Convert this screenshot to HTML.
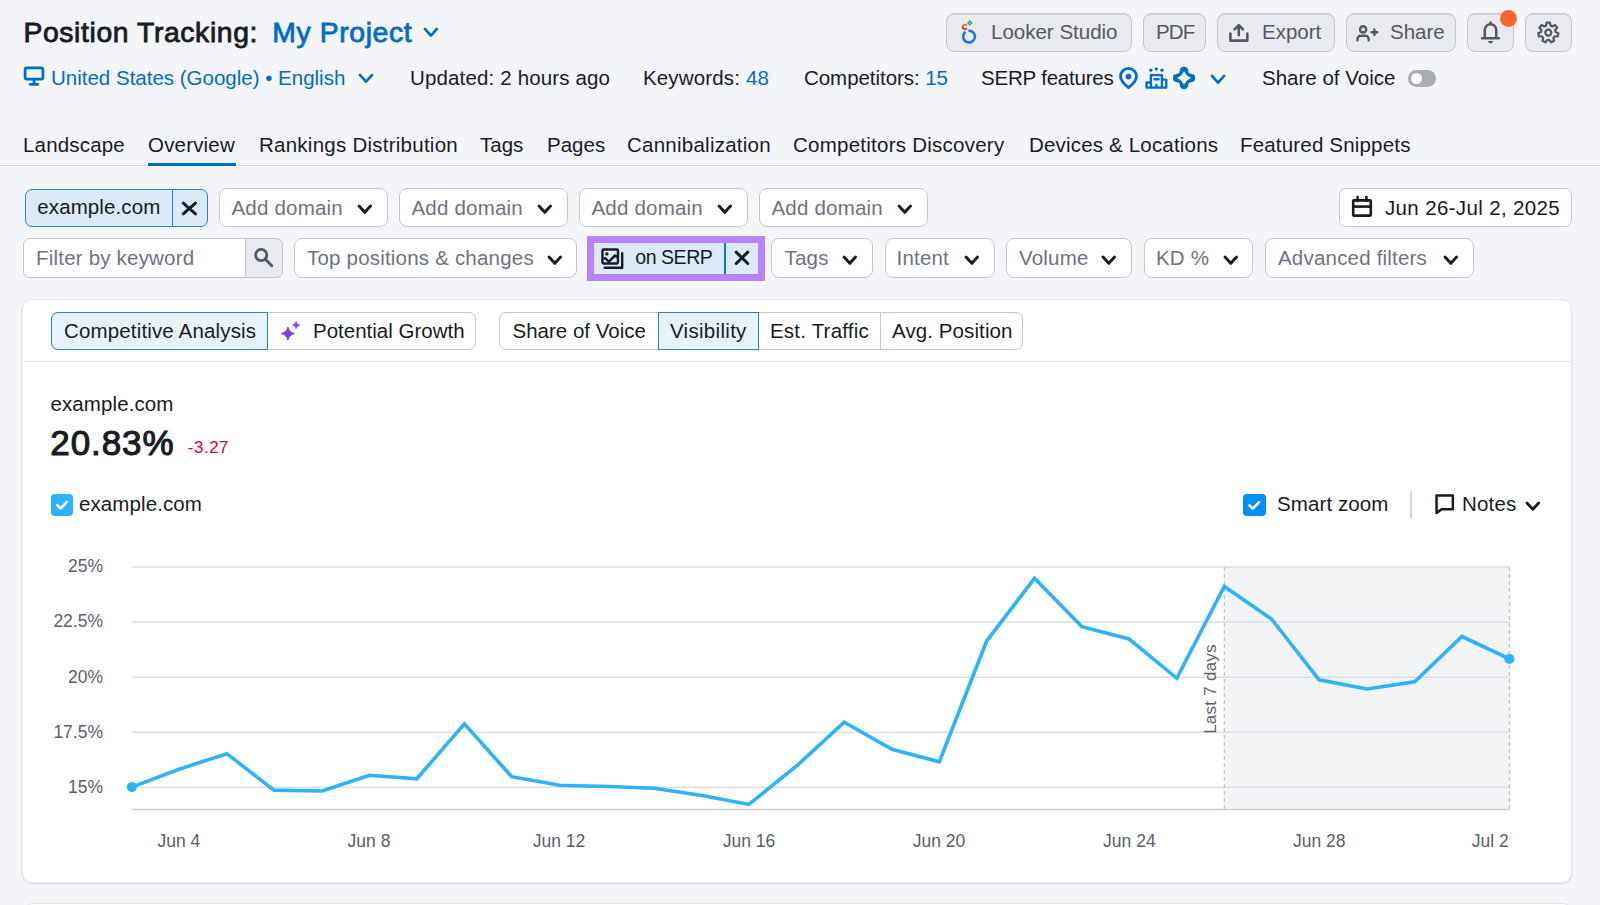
<!DOCTYPE html>
<html><head><meta charset="utf-8">
<style>
*{box-sizing:border-box;margin:0;padding:0}
html,body{width:1600px;height:905px;overflow:hidden}
body{background:#f4f5f9;position:relative;font-family:"Liberation Sans",sans-serif;color:#191b23}
.a{position:absolute;white-space:nowrap}
svg{display:block;overflow:visible}
</style></head><body>
<div class="a" style="left:23.5px;top:18.44px;font-size:28.3px;line-height:28.3px;-webkit-text-stroke:0.85px #191b23;letter-spacing:0.62px;">Position Tracking:</div>
<div class="a" style="left:272.3px;top:18.44px;font-size:28.3px;line-height:28.3px;color:#006dca;-webkit-text-stroke:0.85px #006dca;letter-spacing:0.62px;">My Project</div>
<svg class="a" style="left:421px;top:25.4px" width="19.8" height="14.5" viewBox="0 0 19.8 14.5"><polyline points="3.91,3.91 9.90,10.59 15.89,3.91" fill="none" stroke="#006dca" stroke-width="2.6" stroke-linecap="round" stroke-linejoin="round"/></svg>
<svg class="a" style="left:22px;top:65px" width="24" height="23" viewBox="0 0 24 23"><rect x="3.1" y="2.85" width="17.8" height="11.3" rx="1.6" fill="none" stroke="#006dca" stroke-width="2.7"/><rect x="10.6" y="14" width="2.8" height="4.5" fill="#006dca"/><rect x="6.9" y="17.9" width="10.2" height="2.8" rx="1.4" fill="#006dca"/></svg>
<div class="a" style="left:51px;top:67.65px;font-size:20.5px;line-height:20.5px;color:#006dca;">United States (Google) • English</div>
<svg class="a" style="left:355.5px;top:70.75px" width="20.0" height="14.5" viewBox="0 0 20.0 14.5"><polyline points="3.91,3.91 10.00,10.59 16.09,3.91" fill="none" stroke="#006dca" stroke-width="2.6" stroke-linecap="round" stroke-linejoin="round"/></svg>
<div class="a" style="left:410px;top:67.65px;font-size:20.5px;line-height:20.5px;letter-spacing:0.15px;">Updated: 2 hours ago</div>
<div class="a" style="left:643px;top:67.65px;font-size:20.5px;line-height:20.5px;letter-spacing:0.15px;">Keywords: <span style="color:#006dca">48</span></div>
<div class="a" style="left:804px;top:67.65px;font-size:20.5px;line-height:20.5px;letter-spacing:-0.05px;">Competitors: <span style="color:#006dca">15</span></div>
<div class="a" style="left:981px;top:67.65px;font-size:20.5px;line-height:20.5px;letter-spacing:-0.2px;">SERP features</div>
<svg class="a" style="left:1116px;top:64px" width="26" height="28" viewBox="0 0 26 28"><path d="M12.5,23.6 C8.3,20.2 4.5,16.8 4.5,12.4 A8,8 0 0 1 20.5,12.4 C20.5,16.8 16.7,20.2 12.5,23.6 Z" fill="none" stroke="#006dca" stroke-width="2.85" stroke-linejoin="round"/><circle cx="12.5" cy="12.6" r="2.9" fill="#006dca"/></svg>
<svg class="a" style="left:1144px;top:66px" width="26" height="24" viewBox="0 0 26 24"><circle cx="6.8" cy="4.2" r="1.65" fill="#006dca"/><circle cx="12.4" cy="3.0" r="1.65" fill="#006dca"/><circle cx="18" cy="4.2" r="1.65" fill="#006dca"/><path d="M2.55,21.6 V16.45 H6.9 V9.05 H17.9 V13.65 H22.25 V21.6 Z M6.9,16.45 V21.6 M17.9,13.65 V21.6" fill="none" stroke="#006dca" stroke-width="2.35" stroke-linejoin="round"/><path d="M10.6,13.3 H14.4" stroke="#006dca" stroke-width="2.4" stroke-linecap="round"/><path d="M11.1,21.6 V19.2 A1.3,1.3 0 0 1 13.7,19.2 V21.6 Z" fill="#006dca"/></svg>
<svg class="a" style="left:1172px;top:66px" width="24" height="24" viewBox="0 0 24 24"><path d="M12.05,0.85 C17.25,0.85 15.45,5.35 17.05,6.95 C18.65,8.55 23.15,6.75 23.15,11.95 C23.15,17.15 18.65,15.35 17.05,16.95 C15.45,18.55 17.25,23.05 12.05,23.05 C6.85,23.05 8.65,18.55 7.05,16.95 C5.45,15.35 0.95,17.15 0.95,11.95 C0.95,6.75 5.45,8.55 7.05,6.95 C8.65,5.35 6.85,0.85 12.05,0.85 Z M12.05,5.049999999999999 Q14.15,9.85 18.950000000000003,11.95 Q14.15,14.049999999999999 12.05,18.85 Q9.950000000000001,14.049999999999999 5.15,11.95 Q9.950000000000001,9.85 12.05,5.049999999999999 Z" fill="#006dca" fill-rule="evenodd"/></svg>
<svg class="a" style="left:1207.5px;top:72.1px" width="20.1" height="14.65" viewBox="0 0 20.1 14.65"><polyline points="3.91,3.91 10.05,10.74 16.19,3.91" fill="none" stroke="#006dca" stroke-width="2.6" stroke-linecap="round" stroke-linejoin="round"/></svg>
<div class="a" style="left:1262px;top:67.65px;font-size:20.5px;line-height:20.5px;">Share of Voice</div>
<div class="a" style="left:1408px;top:70px;width:28px;height:17px;border-radius:9px;background:#a9abb6"></div>
<div class="a" style="left:1410.5px;top:72.6px;width:11.8px;height:11.8px;border-radius:50%;background:#fff"></div>
<div class="a" style="left:946px;top:13px;width:186px;height:39px;background:#e9eaf0;border:1px solid #c4c7cf;border-radius:8px;box-shadow:inset 0 1px 0 #d3d5dc;"></div>
<div class="a" style="left:1143px;top:13px;width:63px;height:39px;background:#e9eaf0;border:1px solid #c4c7cf;border-radius:8px;box-shadow:inset 0 1px 0 #d3d5dc;"></div>
<div class="a" style="left:1217px;top:13px;width:118px;height:39px;background:#e9eaf0;border:1px solid #c4c7cf;border-radius:8px;box-shadow:inset 0 1px 0 #d3d5dc;"></div>
<div class="a" style="left:1346px;top:13px;width:110px;height:39px;background:#e9eaf0;border:1px solid #c4c7cf;border-radius:8px;box-shadow:inset 0 1px 0 #d3d5dc;"></div>
<div class="a" style="left:1467px;top:13px;width:47px;height:39px;background:#e9eaf0;border:1px solid #c4c7cf;border-radius:8px;box-shadow:inset 0 1px 0 #d3d5dc;"></div>
<div class="a" style="left:1525px;top:13px;width:47px;height:39px;background:#e9eaf0;border:1px solid #c4c7cf;border-radius:8px;box-shadow:inset 0 1px 0 #d3d5dc;"></div>
<div class="a" style="left:991px;top:21.75px;font-size:20.5px;line-height:20.5px;color:#545865;">Looker Studio</div>
<div class="a" style="left:1156px;top:21.75px;font-size:20.5px;line-height:20.5px;color:#545865;letter-spacing:-0.9px;">PDF</div>
<div class="a" style="left:1262px;top:21.75px;font-size:20.5px;line-height:20.5px;color:#545865;">Export</div>
<div class="a" style="left:1390px;top:21.75px;font-size:20.5px;line-height:20.5px;color:#545865;">Share</div>
<svg class="a" style="left:958px;top:18px" width="22" height="28" viewBox="0 0 22 28"><path d="M10.33,12.74 A5.9,5.9 0 1 1 7.26,14.08" fill="none" stroke="#1a73e8" stroke-width="2.5"/><path d="M8.93,10.22 A2.3,2.3 0 0 1 4.89,8.11" fill="none" stroke="#d9302a" stroke-width="1.8"/><path d="M4.89,8.11 A2.3,2.3 0 0 1 8.81,7.42" fill="none" stroke="#f36b16" stroke-width="1.8"/><rect x="10.5" y="3.6" width="2.6" height="2.6" transform="rotate(45 11.8 4.9)" fill="none" stroke="#34a853" stroke-width="1.5"/></svg>
<svg class="a" style="left:1226px;top:20px" width="26" height="26" viewBox="0 0 26 26"><path d="M12.8,15.2 V5.5 M8.6,9.4 L12.8,5.2 L17,9.4" fill="none" stroke="#545865" stroke-width="2.6" stroke-linecap="round" stroke-linejoin="round"/><path d="M4.4,13.6 V20.6 H21.3 V13.6" fill="none" stroke="#545865" stroke-width="2.6" stroke-linecap="round" stroke-linejoin="round"/></svg>
<svg class="a" style="left:1353px;top:22px" width="28" height="22" viewBox="0 0 28 22"><circle cx="10.1" cy="7.4" r="3.1" fill="none" stroke="#545865" stroke-width="2.4"/><path d="M4.5,18.2 V17 A3.2,3.2 0 0 1 7.7,13.8 H12.5 A3.2,3.2 0 0 1 15.7,17 V18.2" fill="none" stroke="#545865" stroke-width="2.4" stroke-linecap="round"/><path d="M21.4,7.4 V13.1 M18.55,10.25 H24.25" stroke="#545865" stroke-width="2.4" stroke-linecap="round"/></svg>
<svg class="a" style="left:1478px;top:19px" width="26" height="26" viewBox="0 0 26 26"><path d="M6.75,19 V11 A5.75,5.75 0 0 1 18.25,11 V19" fill="none" stroke="#545865" stroke-width="2.5"/><path d="M4.2,19.2 H20.8" stroke="#545865" stroke-width="2.5" stroke-linecap="round"/><path d="M12.5,3.4 V5" stroke="#545865" stroke-width="2.5" stroke-linecap="round"/><path d="M10.1,22.1 A2.4,2.4 0 0 0 14.9,22.1 Z" fill="#545865"/></svg>
<svg class="a" style="left:1536.3px;top:20.2px" width="24" height="24" viewBox="0 0 24 24"><polygon points="10.00,5.67 10.59,2.65 14.01,2.65 14.60,5.67 16.29,6.48 19.02,5.06 21.15,7.73 19.15,10.07 19.57,11.90 22.39,13.15 21.62,16.48 18.54,16.38 17.38,17.85 18.16,20.83 15.08,22.31 13.24,19.84 11.36,19.84 9.52,22.31 6.44,20.83 7.22,17.85 6.06,16.38 2.98,16.48 2.21,13.15 5.03,11.90 5.45,10.07 3.45,7.73 5.58,5.06 8.31,6.48" fill="none" stroke="#545865" stroke-width="2.2" stroke-linejoin="round"/><circle cx="12.3" cy="12.6" r="3.05" fill="none" stroke="#545865" stroke-width="2.2"/></svg>
<div class="a" style="left:1500px;top:9.8px;width:17.2px;height:17.2px;border-radius:50%;background:#ff642d"></div>
<div class="a" style="left:23px;top:134.95px;font-size:20.5px;line-height:20.5px;letter-spacing:0.18px;">Landscape</div>
<div class="a" style="left:148px;top:134.95px;font-size:20.5px;line-height:20.5px;letter-spacing:0.18px;">Overview</div>
<div class="a" style="left:259px;top:134.95px;font-size:20.5px;line-height:20.5px;letter-spacing:0.25px;">Rankings Distribution</div>
<div class="a" style="left:480px;top:134.95px;font-size:20.5px;line-height:20.5px;">Tags</div>
<div class="a" style="left:547px;top:134.95px;font-size:20.5px;line-height:20.5px;">Pages</div>
<div class="a" style="left:627px;top:134.95px;font-size:20.5px;line-height:20.5px;letter-spacing:0.25px;">Cannibalization</div>
<div class="a" style="left:793px;top:134.95px;font-size:20.5px;line-height:20.5px;letter-spacing:0.25px;">Competitors Discovery</div>
<div class="a" style="left:1029px;top:134.95px;font-size:20.5px;line-height:20.5px;letter-spacing:0.18px;">Devices &amp; Locations</div>
<div class="a" style="left:1240px;top:134.95px;font-size:20.5px;line-height:20.5px;letter-spacing:0.18px;">Featured Snippets</div>
<div class="a" style="left:0px;top:164.5px;width:1600px;height:1.5px;background:#d5d7de;"></div>
<div class="a" style="left:148px;top:162.5px;width:88px;height:3.5px;background:#006dca;"></div>
<div class="a" style="left:25px;top:188.5px;width:182.5px;height:38.5px;background:#dbe9f8;border:1px solid #2b7fd4;border-radius:7px;"></div>
<div class="a" style="left:171.5px;top:189.5px;width:1.3000000000000114px;height:36.5px;background:#2b7fd4;"></div>
<div class="a" style="left:37.3px;top:197.15px;font-size:20.5px;line-height:20.5px;letter-spacing:0.1px;">example.com</div>
<svg class="a" style="left:179.3px;top:198.5px" width="20.7" height="19.0" viewBox="0 0 20.7 19.0"><path d="M4.20,4.20 L16.50,14.80 M16.50,4.20 L4.20,14.80" stroke="#191b23" stroke-width="3.0" stroke-linecap="round"/></svg>
<div class="a" style="left:219px;top:188.3px;width:169px;height:38.69999999999999px;background:#fff;border:1px solid #c4c7cf;border-radius:8px;"></div>
<div class="a" style="left:231.5px;top:198.05px;font-size:20.5px;line-height:20.5px;color:#6e7382;letter-spacing:0.2px;">Add domain</div>
<svg class="a" style="left:354.7px;top:202.4px" width="19.6" height="14.4" viewBox="0 0 19.6 14.4"><polyline points="4.03,4.03 9.80,10.37 15.57,4.03" fill="none" stroke="#191b23" stroke-width="2.95" stroke-linecap="round" stroke-linejoin="round"/></svg>
<div class="a" style="left:399px;top:188.3px;width:169px;height:38.69999999999999px;background:#fff;border:1px solid #c4c7cf;border-radius:8px;"></div>
<div class="a" style="left:411.5px;top:198.05px;font-size:20.5px;line-height:20.5px;color:#6e7382;letter-spacing:0.2px;">Add domain</div>
<svg class="a" style="left:534.7px;top:202.4px" width="19.6" height="14.4" viewBox="0 0 19.6 14.4"><polyline points="4.03,4.03 9.80,10.37 15.57,4.03" fill="none" stroke="#191b23" stroke-width="2.95" stroke-linecap="round" stroke-linejoin="round"/></svg>
<div class="a" style="left:579px;top:188.3px;width:169px;height:38.69999999999999px;background:#fff;border:1px solid #c4c7cf;border-radius:8px;"></div>
<div class="a" style="left:591.5px;top:198.05px;font-size:20.5px;line-height:20.5px;color:#6e7382;letter-spacing:0.2px;">Add domain</div>
<svg class="a" style="left:714.7px;top:202.4px" width="19.6" height="14.4" viewBox="0 0 19.6 14.4"><polyline points="4.03,4.03 9.80,10.37 15.57,4.03" fill="none" stroke="#191b23" stroke-width="2.95" stroke-linecap="round" stroke-linejoin="round"/></svg>
<div class="a" style="left:759px;top:188.3px;width:169px;height:38.69999999999999px;background:#fff;border:1px solid #c4c7cf;border-radius:8px;"></div>
<div class="a" style="left:771.5px;top:198.05px;font-size:20.5px;line-height:20.5px;color:#6e7382;letter-spacing:0.2px;">Add domain</div>
<svg class="a" style="left:894.7px;top:202.4px" width="19.6" height="14.4" viewBox="0 0 19.6 14.4"><polyline points="4.03,4.03 9.80,10.37 15.57,4.03" fill="none" stroke="#191b23" stroke-width="2.95" stroke-linecap="round" stroke-linejoin="round"/></svg>
<div class="a" style="left:1339px;top:188.4px;width:233px;height:38.69999999999999px;background:#fff;border:1px solid #c4c7cf;border-radius:7px;"></div>
<svg class="a" style="left:1350px;top:195px" width="24" height="24" viewBox="0 0 24 24"><rect x="3.2" y="5.4" width="17.6" height="15.2" rx="0.8" fill="none" stroke="#191b23" stroke-width="2.6"/><path d="M3.2,11.6 H20.8" stroke="#191b23" stroke-width="2.6"/><path d="M7.6,2 V6 M16.4,2 V6" stroke="#191b23" stroke-width="2.6" stroke-linecap="round"/></svg>
<div class="a" style="left:1385px;top:197.65px;font-size:20.5px;line-height:20.5px;letter-spacing:0.35px;">Jun 26-Jul 2, 2025</div>
<div class="a" style="left:23px;top:238.4px;width:260px;height:39.20000000000002px;background:#fff;border:1px solid #c4c7cf;border-radius:7px;"></div>
<div class="a" style="left:245px;top:238.4px;width:38px;height:39.2px;background:#e9eaf0;border:1px solid #c4c7cf;border-radius:0 7px 7px 0"></div>
<div class="a" style="left:36px;top:248.15px;font-size:20.5px;line-height:20.5px;color:#6e7382;letter-spacing:0.2px;">Filter by keyword</div>
<svg class="a" style="left:250px;top:244px" width="28" height="28" viewBox="0 0 28 28"><circle cx="11.2" cy="11" r="5.6" fill="none" stroke="#545865" stroke-width="2.8"/><path d="M15.3,15.2 L21.8,21.8" stroke="#545865" stroke-width="2.8" stroke-linecap="round"/></svg>
<div class="a" style="left:294.4px;top:238.4px;width:283.1px;height:39.20000000000002px;background:#fff;border:1px solid #c4c7cf;border-radius:8px;"></div>
<div class="a" style="left:307px;top:248.15px;font-size:20.5px;line-height:20.5px;color:#6e7382;letter-spacing:0.2px;">Top positions &amp; changes</div>
<svg class="a" style="left:544.9px;top:252.5px" width="19.6" height="14.4" viewBox="0 0 19.6 14.4"><polyline points="4.03,4.03 9.80,10.37 15.57,4.03" fill="none" stroke="#191b23" stroke-width="2.95" stroke-linecap="round" stroke-linejoin="round"/></svg>
<div class="a" style="left:587px;top:236px;width:178px;height:45px;background:#b983fd;"></div>
<div class="a" style="left:594px;top:243px;width:164px;height:31px;background:#dbe9f8;"></div>
<div class="a" style="left:723.5px;top:243px;width:2.0px;height:31px;background:#1a6fd0;"></div>
<svg class="a" style="left:597px;top:244px" width="30" height="28" viewBox="0 0 30 28"><rect x="5.45" y="5.45" width="15.5" height="14" rx="1.2" fill="none" stroke="#191b23" stroke-width="2.4"/><circle cx="9.9" cy="9.9" r="1.7" fill="#191b23"/><polyline points="6.3,14.8 8.5,14.2 11.8,17.8 18,11.4 21,13.4" fill="none" stroke="#191b23" stroke-width="2.4" stroke-linejoin="round"/><path d="M7.7,23.8 H25.2 V9.3" fill="none" stroke="#191b23" stroke-width="2.4" stroke-linecap="round" stroke-linejoin="round"/></svg>
<div class="a" style="left:635.3px;top:248.49px;font-size:19.5px;line-height:19.5px;letter-spacing:-0.45px;">on SERP</div>
<svg class="a" style="left:732.3px;top:248.3px" width="20.0" height="19.7" viewBox="0 0 20.0 19.7"><path d="M4.20,4.20 L15.80,15.50 M15.80,4.20 L4.20,15.50" stroke="#191b23" stroke-width="3.0" stroke-linecap="round"/></svg>
<div class="a" style="left:771.3px;top:238.4px;width:101.40000000000009px;height:39.20000000000002px;background:#fff;border:1px solid #c4c7cf;border-radius:8px;"></div>
<div class="a" style="left:784.5px;top:248.15px;font-size:20.5px;line-height:20.5px;color:#6e7382;letter-spacing:0.2px;">Tags</div>
<svg class="a" style="left:840.4px;top:252.5px" width="19.6" height="14.4" viewBox="0 0 19.6 14.4"><polyline points="4.03,4.03 9.80,10.37 15.57,4.03" fill="none" stroke="#191b23" stroke-width="2.95" stroke-linecap="round" stroke-linejoin="round"/></svg>
<div class="a" style="left:884.5px;top:238.4px;width:110.0px;height:39.20000000000002px;background:#fff;border:1px solid #c4c7cf;border-radius:8px;"></div>
<div class="a" style="left:896.5px;top:248.15px;font-size:20.5px;line-height:20.5px;color:#6e7382;letter-spacing:0.2px;">Intent</div>
<svg class="a" style="left:961.9px;top:252.5px" width="19.6" height="14.4" viewBox="0 0 19.6 14.4"><polyline points="4.03,4.03 9.80,10.37 15.57,4.03" fill="none" stroke="#191b23" stroke-width="2.95" stroke-linecap="round" stroke-linejoin="round"/></svg>
<div class="a" style="left:1006.2px;top:238.4px;width:126.20000000000005px;height:39.20000000000002px;background:#fff;border:1px solid #c4c7cf;border-radius:8px;"></div>
<div class="a" style="left:1019px;top:248.15px;font-size:20.5px;line-height:20.5px;color:#6e7382;letter-spacing:0.2px;">Volume</div>
<svg class="a" style="left:1099.4px;top:252.5px" width="19.6" height="14.4" viewBox="0 0 19.6 14.4"><polyline points="4.03,4.03 9.80,10.37 15.57,4.03" fill="none" stroke="#191b23" stroke-width="2.95" stroke-linecap="round" stroke-linejoin="round"/></svg>
<div class="a" style="left:1143.8px;top:238.4px;width:109.70000000000005px;height:39.20000000000002px;background:#fff;border:1px solid #c4c7cf;border-radius:8px;"></div>
<div class="a" style="left:1156px;top:248.15px;font-size:20.5px;line-height:20.5px;color:#6e7382;letter-spacing:0.2px;">KD %</div>
<svg class="a" style="left:1220.8000000000002px;top:252.5px" width="19.6" height="14.4" viewBox="0 0 19.6 14.4"><polyline points="4.03,4.03 9.80,10.37 15.57,4.03" fill="none" stroke="#191b23" stroke-width="2.95" stroke-linecap="round" stroke-linejoin="round"/></svg>
<div class="a" style="left:1265px;top:238.4px;width:208.79999999999995px;height:39.20000000000002px;background:#fff;border:1px solid #c4c7cf;border-radius:8px;"></div>
<div class="a" style="left:1278px;top:248.15px;font-size:20.5px;line-height:20.5px;color:#6e7382;letter-spacing:0.2px;">Advanced filters</div>
<svg class="a" style="left:1441.4px;top:252.5px" width="19.6" height="14.4" viewBox="0 0 19.6 14.4"><polyline points="4.03,4.03 9.80,10.37 15.57,4.03" fill="none" stroke="#191b23" stroke-width="2.95" stroke-linecap="round" stroke-linejoin="round"/></svg>
<div class="a" style="left:21.8px;top:298.8px;width:1550.7px;height:584.3px;background:#fff;border:1px solid #e6e7ed;border-radius:10px;box-shadow:0 1px 2px rgba(25,27,35,0.12)"></div>
<div class="a" style="left:23.5px;top:360.8px;width:1548.0px;height:1.6999999999999886px;background:#e0e1e9;"></div>
<div class="a" style="left:22.5px;top:903px;width:1550px;height:20px;background:#fff;border:1px solid #e0e1e9;border-radius:10px"></div>
<div class="a" style="left:51.2px;top:311.5px;width:425.3px;height:38.60000000000002px;background:#fff;border:1px solid #c4c7cf;border-radius:7px;"></div>
<div class="a" style="left:51.2px;top:311.5px;width:216.8px;height:38.6px;background:#e6f3fe;border:1px solid #2b7fd4;border-radius:7px 0 0 7px"></div>
<div class="a" style="left:64px;top:321.15px;font-size:20.5px;line-height:20.5px;letter-spacing:0.15px;">Competitive Analysis</div>
<svg class="a" style="left:279px;top:319px" width="24" height="24" viewBox="0 0 24 24"><path d="M8.9,8.1 Q10.1,13.4 15.4,14.6 Q10.1,15.799999999999999 8.9,21.1 Q7.7,15.799999999999999 2.4000000000000004,14.6 Q7.7,13.4 8.9,8.1 Z" fill="#7a45e6" stroke="#7a45e6" stroke-width="1" stroke-linejoin="round"/><path d="M17.1,2.5999999999999996 Q17.8,5.3999999999999995 20.6,6.1 Q17.8,6.8 17.1,9.6 Q16.400000000000002,6.8 13.600000000000001,6.1 Q16.400000000000002,5.3999999999999995 17.1,2.5999999999999996 Z" fill="#8a50ee" stroke="#8a50ee" stroke-width="0.9" stroke-linejoin="round"/></svg>
<div class="a" style="left:313px;top:321.15px;font-size:20.5px;line-height:20.5px;letter-spacing:0px;">Potential Growth</div>
<div class="a" style="left:499.4px;top:311.5px;width:523.2px;height:38.60000000000002px;background:#fff;border:1px solid #c4c7cf;border-radius:7px;"></div>
<div class="a" style="left:657.5px;top:311.5px;width:101.2px;height:38.6px;background:#e6f3fe;border:1px solid #2b7fd4"></div>
<div class="a" style="left:879.8px;top:312.5px;width:1.2000000000000455px;height:36.0px;background:#c4c7cf;"></div>
<div class="a" style="left:512.5px;top:321.15px;font-size:20.5px;line-height:20.5px;">Share of Voice</div>
<div class="a" style="left:670px;top:321.15px;font-size:20.5px;line-height:20.5px;letter-spacing:0.3px;">Visibility</div>
<div class="a" style="left:770px;top:321.15px;font-size:20.5px;line-height:20.5px;letter-spacing:0.2px;">Est. Traffic</div>
<div class="a" style="left:892px;top:321.15px;font-size:20.5px;line-height:20.5px;letter-spacing:0.1px;">Avg. Position</div>
<div class="a" style="left:50.5px;top:393.95px;font-size:20.5px;line-height:20.5px;letter-spacing:0.1px;">example.com</div>
<div class="a" style="left:50.3px;top:425.37px;font-size:35px;line-height:35px;-webkit-text-stroke:1.1px #191b23;letter-spacing:0.9px;">20.83%</div>
<div class="a" style="left:187.8px;top:440.38px;font-size:16.8px;line-height:16.8px;color:#d1002f;letter-spacing:0.6px;">-3.27</div>
<div class="a" style="left:51.3px;top:494.3px;width:21.8px;height:21.5px;border-radius:4px;background:#2bb3ff"></div>
<svg class="a" style="left:51.3px;top:494.3px" width="22" height="22" viewBox="0 0 22 22"><path d="M6.3,11.2 L9.6,14.4 L15.8,8" fill="none" stroke="#fff" stroke-width="2.6" stroke-linecap="round" stroke-linejoin="round"/></svg>
<div class="a" style="left:79px;top:493.95px;font-size:20.5px;line-height:20.5px;letter-spacing:0.1px;">example.com</div>
<div class="a" style="left:1243px;top:493.8px;width:22.5px;height:22.5px;border-radius:4px;background:#008ff8"></div>
<svg class="a" style="left:1243px;top:493.8px" width="22" height="22" viewBox="0 0 22 22"><path d="M6.5,11.4 L9.8,14.6 L16,8.2" fill="none" stroke="#fff" stroke-width="2.6" stroke-linecap="round" stroke-linejoin="round"/></svg>
<div class="a" style="left:1277px;top:493.95px;font-size:20.5px;line-height:20.5px;letter-spacing:0.1px;">Smart zoom</div>
<div class="a" style="left:1410px;top:491px;width:1.5px;height:28px;background:#d5d7de;"></div>
<svg class="a" style="left:1432px;top:491px" width="26" height="26" viewBox="0 0 26 26"><path d="M4.55,22 V4.45 H20.85 V18.3 H9.6 Z" fill="none" stroke="#191b23" stroke-width="2.5" stroke-linejoin="round"/></svg>
<div class="a" style="left:1462px;top:493.95px;font-size:20.5px;line-height:20.5px;letter-spacing:0.2px;">Notes</div>
<svg class="a" style="left:1523.3px;top:499px" width="19.7" height="14.3" viewBox="0 0 19.7 14.3"><polyline points="3.98,3.98 9.85,10.32 15.72,3.98" fill="none" stroke="#191b23" stroke-width="2.8" stroke-linecap="round" stroke-linejoin="round"/></svg>
<svg class="a" style="left:0;top:0" width="1600" height="905" viewBox="0 0 1600 905"><rect x="1224.3" y="567" width="285.1" height="242.5" fill="#f3f4f6"/><line x1="131.9" y1="567.0" x2="1509.4" y2="567.0" stroke="#dddee7" stroke-width="1.5"/><line x1="131.9" y1="622.0" x2="1509.4" y2="622.0" stroke="#dddee7" stroke-width="1.5"/><line x1="131.9" y1="677.3" x2="1509.4" y2="677.3" stroke="#dddee7" stroke-width="1.5"/><line x1="131.9" y1="732.3" x2="1509.4" y2="732.3" stroke="#dddee7" stroke-width="1.5"/><line x1="131.9" y1="787.2" x2="1509.4" y2="787.2" stroke="#dddee7" stroke-width="1.5"/><line x1="131.9" y1="809.5" x2="1509.4" y2="809.5" stroke="#c9cbd3" stroke-width="1.6"/><line x1="1224.3" y1="567" x2="1224.3" y2="809" stroke="#bfc1c9" stroke-width="1.2" stroke-dasharray="4 3"/><line x1="1509.4" y1="567" x2="1509.4" y2="809" stroke="#bfc1c9" stroke-width="1.2" stroke-dasharray="4 3"/><polyline points="131.9,787.1 179,769.2 226.8,753.7 273.9,790.1 322.2,791 369.4,775.2 416.8,778.8 464.4,723.9 511.7,776.7 559.5,785.3 607.2,786.5 654.3,788.3 702.0,795.5 748.9,804.4 796.9,765.7 844.2,722.1 891.9,749.3 939.3,761.8 986.7,641.0 1034.5,578.3 1081.9,626.7 1129.0,638.9 1176.8,678.3 1224.3,586.4 1271.7,619.2 1319.1,679.8 1366.9,689.0 1414.6,681.8 1462.0,636.5 1509.4,658.9" fill="none" stroke="#2bb3ff" stroke-width="3.6" stroke-linejoin="miter" stroke-miterlimit="3"/><circle cx="131.9" cy="787.1" r="5" fill="#2bb3ff"/><circle cx="1509.4" cy="658.9" r="5" fill="#2bb3ff"/></svg>
<div class="a" style="left:0;width:103px;text-align:right;top:557.4px;font-size:17.5px;line-height:18px;color:#5b5e6b">25%</div>
<div class="a" style="left:0;width:103px;text-align:right;top:612.4px;font-size:17.5px;line-height:18px;color:#5b5e6b">22.5%</div>
<div class="a" style="left:0;width:103px;text-align:right;top:667.7px;font-size:17.5px;line-height:18px;color:#5b5e6b">20%</div>
<div class="a" style="left:0;width:103px;text-align:right;top:722.7px;font-size:17.5px;line-height:18px;color:#5b5e6b">17.5%</div>
<div class="a" style="left:0;width:103px;text-align:right;top:777.6px;font-size:17.5px;line-height:18px;color:#5b5e6b">15%</div>
<div class="a" style="left:118.9px;width:120px;text-align:center;top:832.1px;font-size:17.5px;line-height:18px;color:#5b5e6b">Jun 4</div>
<div class="a" style="left:309.0px;width:120px;text-align:center;top:832.1px;font-size:17.5px;line-height:18px;color:#5b5e6b">Jun 8</div>
<div class="a" style="left:499.0px;width:120px;text-align:center;top:832.1px;font-size:17.5px;line-height:18px;color:#5b5e6b">Jun 12</div>
<div class="a" style="left:689.0px;width:120px;text-align:center;top:832.1px;font-size:17.5px;line-height:18px;color:#5b5e6b">Jun 16</div>
<div class="a" style="left:879.0px;width:120px;text-align:center;top:832.1px;font-size:17.5px;line-height:18px;color:#5b5e6b">Jun 20</div>
<div class="a" style="left:1069.4px;width:120px;text-align:center;top:832.1px;font-size:17.5px;line-height:18px;color:#5b5e6b">Jun 24</div>
<div class="a" style="left:1259.3px;width:120px;text-align:center;top:832.1px;font-size:17.5px;line-height:18px;color:#5b5e6b">Jun 28</div>
<div class="a" style="left:1430.2px;width:120px;text-align:center;top:832.1px;font-size:17.5px;line-height:18px;color:#5b5e6b">Jul 2</div>
<div class="a" style="left:1151px;top:680.3px;width:120px;text-align:center;font-size:17px;line-height:18px;color:#5b5e6b;letter-spacing:0.25px;transform:rotate(-90deg)">Last 7 days</div>
</body></html>
